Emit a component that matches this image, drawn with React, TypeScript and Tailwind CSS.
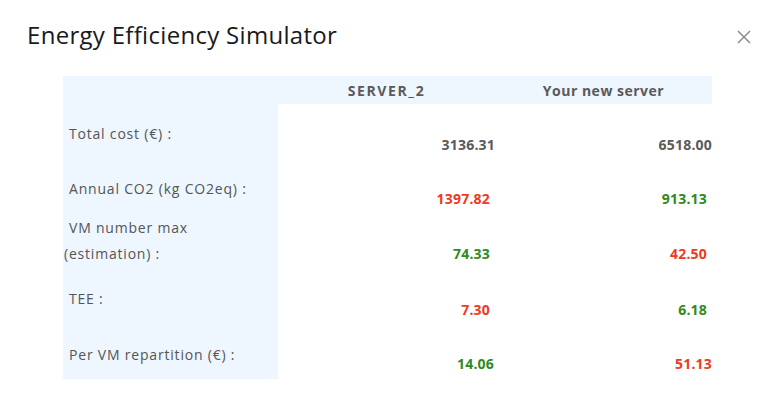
import React from 'react'

const red = 'text-[#ee3a1c]'
const green = 'text-[#2f8a1b]'
const gray = 'text-[#5a5a5a]'

const rows = [
  { label: 'Total cost (€) :', h: 'h-[56px]', lp: 'pt-[17px]', vp: 'pt-[31px]', a: '3136.31', ac: gray, ar: 'pr-0', b: '6518.00', bc: gray, br: 'pr-0' },
  { label: 'Annual CO2 (kg CO2eq) :', h: 'h-[55px]', lp: 'pt-[16px]', vp: 'pt-[29px]', a: '1397.82', ac: red, ar: 'pr-[5px]', b: '913.13', bc: green, br: 'pr-[5px]' },
  { label: 'VM number max (estimation) :', h: 'h-[56px]', lp: 'pt-0', vp: 'pt-[29px]', a: '74.33', ac: green, ar: 'pr-[5px]', b: '42.50', bc: red, br: 'pr-[5px]' },
  { label: 'TEE :', h: 'h-[56px]', lp: 'pt-[15px]', vp: 'pt-[29px]', a: '7.30', ac: red, ar: 'pr-[5px]', b: '6.18', bc: green, br: 'pr-[5px]' },
  { label: 'Per VM repartition (€) :', h: 'h-[52px]', lp: 'pt-[15px]', vp: 'pt-[27px]', a: '14.06', ac: green, ar: 'pr-[1px]', b: '51.13', bc: red, br: 'pr-0' },
]

export default function App() {
  return (
    <div className="w-[776px] h-[398px] bg-white font-['Open_Sans',sans-serif] overflow-hidden">
      <div className="flex items-start justify-between pl-[27px] pr-[24px] pt-[19px]">
        <h1 className="text-[24px] leading-[32px] text-[#1a1a1a] font-normal tracking-[0.3px]">Energy Efficiency Simulator</h1>
        <button className="mt-[10px] w-[16px] h-[16px] text-[#8c8c8c]">
          <svg viewBox="0 0 16 16" width="16" height="16" fill="none" stroke="currentColor" strokeWidth="1.5">
            <path d="M2 2 L14 14 M14 2 L2 14" />
          </svg>
        </button>
      </div>

      <div className="ml-[63px] mt-[25px] w-[649px] grid grid-cols-[215px_217px_217px] text-[14px]">
        <div className="h-[28px] bg-[#eef6ff]" />
        <div className={`h-[28px] bg-[#eef6ff] flex items-center justify-center font-bold tracking-[1.6px] ${gray}`}>SERVER_2</div>
        <div className={`h-[28px] bg-[#eef6ff] flex items-center justify-center font-bold tracking-[0.5px] ${gray}`}>Your new server</div>
        {rows.map(r => (
          <React.Fragment key={r.label}>
            <div className={`${r.h} ${r.lp} bg-[#eef6ff] pl-[1px] pr-[60px] indent-[5px] leading-[26px] tracking-[0.8px] text-[#555]`}>
              <span className={r.label.startsWith('VM') ? '' : 'whitespace-nowrap'}>{r.label}</span>
            </div>
            <div className={`${r.h} ${r.vp} ${r.ar} text-right leading-[20px] font-bold tracking-[0.2px] ${r.ac}`}>{r.a}</div>
            <div className={`${r.h} ${r.vp} ${r.br} text-right leading-[20px] font-bold tracking-[0.2px] ${r.bc}`}>{r.b}</div>
          </React.Fragment>
        ))}
      </div>
    </div>
  )
}
